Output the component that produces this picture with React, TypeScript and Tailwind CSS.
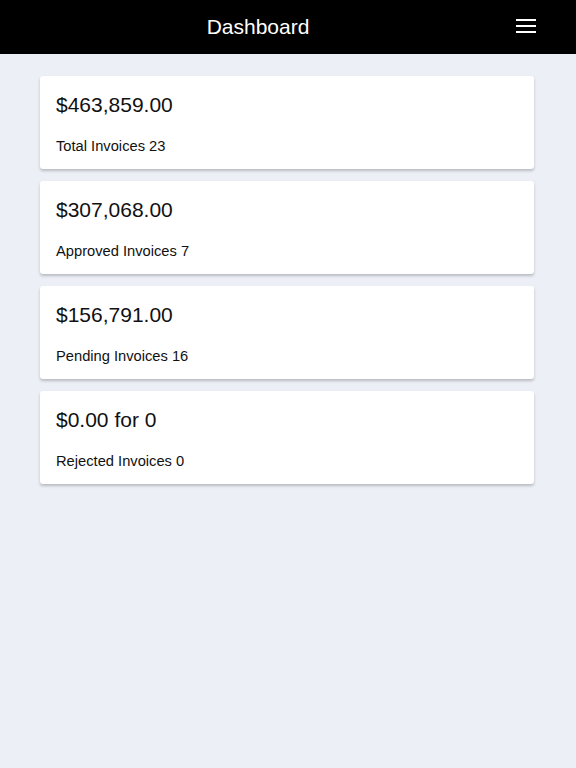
import React from 'react';

interface Stat {
  amount: string;
  label: string;
}

const stats: Stat[] = [
  { amount: '$463,859.00', label: 'Total Invoices 23' },
  { amount: '$307,068.00', label: 'Approved Invoices 7' },
  { amount: '$156,791.00', label: 'Pending Invoices 16' },
  { amount: '$0.00 for 0', label: 'Rejected Invoices 0' },
];

export default function App() {
  return (
    <div
      className="min-h-screen bg-[#eceff6] text-[#111111]"
      style={{ fontFamily: '"Liberation Sans", Arial, sans-serif' }}
    >
      {/* Header */}
      <div className="h-[54px] bg-black flex items-center pr-[40px]">
        <h1 className="flex-1 text-center text-white text-[21px] leading-none -mt-[2px]">Dashboard</h1>
        <button className="w-5 h-5 flex flex-col justify-center gap-[4px] -mt-[2px]" aria-label="Menu">
          <span className="block h-[2px] w-5 bg-white"></span>
          <span className="block h-[2px] w-5 bg-white"></span>
          <span className="block h-[2px] w-5 bg-white"></span>
        </button>
      </div>

      {/* Cards */}
      <div className="pt-[22px] pl-[40px] pr-[42px] flex flex-col gap-3">
        {stats.map((s) => (
          <div
            key={s.label}
            className="h-[93px] bg-white rounded-[3px] px-4 pt-4 shadow-[0_2px_3px_rgba(0,0,0,0.22)]"
          >
            <div className="text-[21px] leading-[25px]">{s.amount}</div>
            <div className="mt-[21px] text-[14.7px] leading-[17px]">{s.label}</div>
          </div>
        ))}
      </div>
    </div>
  );
}
